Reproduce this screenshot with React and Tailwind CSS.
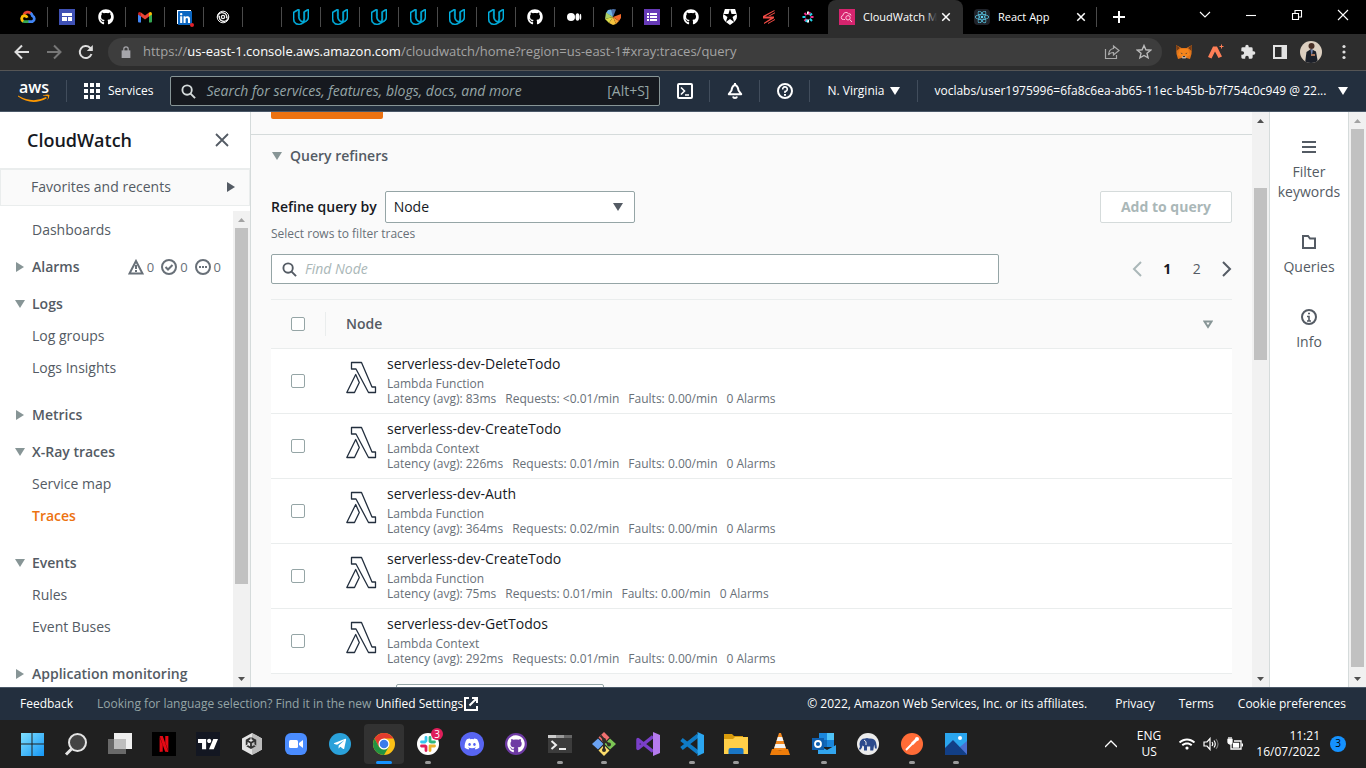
import React from "react";
import { FaGithub, FaDiscord, FaLinkedin, FaReact, FaTelegramPlane, FaWifi } from "react-icons/fa";
import { FaUnity } from "react-icons/fa6";
import { SiUdacity, SiAuth0, SiNetflix, SiTradingview } from "react-icons/si";

/* ---------- shared glyphs ---------- */

function Caret({ dir = "down", className = "" }) {
  const d = { down: "M0 1h10L5 9z", right: "M1 0v10l8-5z" }[dir];
  return (
    <svg viewBox="0 0 10 10" className={`size-[10px] shrink-0 ${className}`} fill="currentColor" aria-hidden="true">
      <path d={d} />
    </svg>
  );
}

function Cross({ className = "", width = 2 }) {
  return (
    <svg viewBox="0 0 16 16" className={className} fill="none" stroke="currentColor" strokeWidth={width} aria-hidden="true">
      <path d="M2 2l12 12M14 2L2 14" />
    </svg>
  );
}

function Magnifier({ className = "" }) {
  return (
    <svg viewBox="0 0 16 16" className={className} fill="none" stroke="currentColor" strokeWidth="2" aria-hidden="true">
      <circle cx="6.5" cy="6.5" r="5" />
      <path d="M10.2 10.2l4.8 4.8" />
    </svg>
  );
}

function Scrollbar({ offset, thumb, upColor = "text-[#505050]", className = "" }) {
  return (
    <div className={`flex w-[17px] shrink-0 flex-col items-center bg-[#f1f1f1] ${className}`} aria-hidden="true">
      <svg viewBox="0 0 17 17" className={`size-[17px] shrink-0 ${upColor}`} fill="currentColor">
        <path d="M5 11h7L8.500 7z" />
      </svg>
      <div className={`shrink-0 ${offset}`} />
      <div className={`w-[13px] bg-[#c1c1c1] ${thumb}`} />
      <div className="flex-1" />
      <svg viewBox="0 0 17 17" className="size-[17px] shrink-0 text-[#505050]" fill="currentColor">
        <path d="M5 7h7l-3.500 4z" />
      </svg>
    </div>
  );
}

/* ---------- browser favicons ---------- */

const CloudIcon = () => (
  <svg viewBox="0 0 16 16" className="size-4" fill="none" strokeWidth="2.800">
    <path d="M3.800 5.800A4.400 4.400 0 0 1 11 4.500" stroke="#ea4335" />
    <path d="M10.600 4.200Q12 5.200 12.400 6.800A3.200 3.200 0 0 1 12.500 12.600H8" stroke="#4285f4" />
    <path d="M8.500 12.600H4.500Q3.300 12.600 2.500 12" stroke="#34a853" />
    <path d="M3.200 12.400A3.200 3.200 0 0 1 4 6.600Q6.300 6.400 7.200 8.800" stroke="#fbbc05" />
  </svg>
);
const SitesIcon = () => (
  <svg viewBox="0 0 16 16" className="size-4">
    <path fill="#3f51b5" d="M0 0h16v16H0z" />
    <path fill="#fff" d="M3 4h10v3H3zM3 8h5v4H3zM9 8h4v4H9z" />
  </svg>
);
const MailIcon = () => (
  <svg viewBox="0 0 16 16" className="size-4">
    <path fill="#4285f4" d="M1 5l3 2v6.500H2a1 1 0 0 1-1-1z" />
    <path fill="#34a853" d="M12 7l3-2v7.500a1 1 0 0 1-1 1h-2z" />
    <path fill="#ea4335" d="M4 3.500l4 3 4-3V7.500l-4 3-4-3z" />
    <path fill="#c5221f" d="M1 4.500Q1.500 2 4 3.500V7.500L1 5.500z" />
    <path fill="#fbbc04" d="M15 4.500Q14.500 2 12 3.500V7.500l3-2z" />
  </svg>
);
const LinkedIn = () => (
  <span className="relative">
    <span className="block size-4 p-px">
      <span className="block size-3.5 bg-white">
        <FaLinkedin className="size-4 text-[#0a66c2]" />
      </span>
    </span>
    <span className="absolute -right-0.5 -bottom-0.5 size-1 rounded-full bg-[#e0202a]" />
  </span>
);
const SwirlIcon = () => (
  <svg viewBox="0 0 16 16" className="size-4" fill="none" stroke="#eee" strokeWidth="1.300">
    <circle cx="8" cy="8" r="5.800" strokeWidth="1" />
    <path d="M2.500 8.500A4.500 4.500 0 0 1 9 4.200a3.800 3.800 0 0 1 2.500 5M13.500 7.500A4.500 4.500 0 0 1 7 11.800a3.800 3.800 0 0 1-2.500-5" />
    <circle cx="8" cy="8" r="1.600" />
  </svg>
);
const MediumIcon = () => (
  <svg viewBox="0 0 16 16" className="size-4" fill="#fff">
    <circle cx="5" cy="8" r="4" />
    <ellipse cx="11.500" cy="8" rx="2" ry="3.800" />
    <ellipse cx="14.500" cy="8" rx=".8" ry="3.300" />
  </svg>
);
const WheelIcon = () => (
  <svg viewBox="0 0 16 16" className="size-4">
    <path fill="#4c6fa8" d="M8 8L5 1l3-1 3 .5z" />
    <path fill="#6fb4e4" d="M8 8L1 4l2-3 3-.5z" />
    <path fill="#a9cf66" d="M8 8L1 3.500 0 10z" />
    <path fill="#d8dc4a" d="M8 8l-8 2 4 4z" />
    <path fill="#f5c33d" d="M8 8l-4 6 4 2 3-1z" />
    <path fill="#f5a030" d="M8 8l3 7 3-3z" />
    <path fill="#f2692a" d="M8 8l6 4 2-3V5z" />
  </svg>
);
const FormIcon = () => (
  <svg viewBox="0 0 16 16" className="size-4">
    <path fill="#673ab7" d="M0 0h16v16H0z" />
    <path fill="#fff" d="M3 4h2v2H3zM6 4h7v2H6zM3 7h2v2H3zM6 7h7v2H6zM3 10h2v2H3zM6 10h7v2H6z" />
  </svg>
);
const RedBolt = () => (
  <svg viewBox="0 0 16 16" className="size-4" fill="#f24b45">
    <path d="M13.500 1v1L4 7.500h9v1.800L3 15v-1.200L9.500 9.500H2V7z" />
    <path d="M14 3.300v1L9 7H7.200zM14 10v1l-7 4v-1z" />
  </svg>
);
const SparkIcon = () => (
  <svg viewBox="0 0 16 16" className="size-4" strokeWidth="2">
    <path stroke="#fff" d="M8 2.500v3M8 10.500v3" />
    <path stroke="#f0308c" d="M4.500 4l2 2.200M10.500 8h3M4.500 12l2-2.200M10 3.200L9 5.800" />
    <path stroke="#25d2e8" d="M12 4.500L9.800 6.500M9.800 9.800L12 12M2.500 8h3M6 13l1-2.500" />
  </svg>
);
const WatchIcon = () => (
  <svg viewBox="0 0 16 16" className="size-4 shrink-0">
    <path fill="#d6246e" d="M0 0h16v16H0z" />
    <g fill="none" stroke="#ffc7dd" strokeWidth="1">
      <path d="M6 10.500H4.500A2 2 0 0 1 4 6.500a3 3 0 0 1 5.500-1.700 2 2 0 0 1 2.500 1.700" />
      <circle cx="9" cy="8.800" r="2.200" />
      <path d="M10.700 10.500l2.300 2.500" />
    </g>
  </svg>
);

const Github = () => <FaGithub className="size-4 text-white" />;
const Udacity = () => <SiUdacity className="size-4 stroke-[#02b3e4] stroke-1 text-[#02b3e4]" />;
const Shield = () => <SiAuth0 className="size-4 text-white" />;
const Blank = () => null;

const pinned = [
  ["Cloud", CloudIcon], ["Sites", SitesIcon], ["GitHub", Github], ["Mail", MailIcon], ["LinkedIn", LinkedIn],
  ["Swirl", SwirlIcon], ["New tab", Blank], ["Udacity", Udacity], ["Udacity", Udacity], ["Udacity", Udacity],
  ["Udacity", Udacity], ["Udacity", Udacity], ["Udacity", Udacity], ["GitHub", Github], ["Medium", MediumIcon],
  ["Wheel", WheelIcon], ["Forms", FormIcon], ["GitHub", Github], ["Auth0", Shield], ["Serverless", RedBolt],
  ["Spark", SparkIcon],
];

function TabStrip() {
  return (
    <div className="flex h-[34px] shrink-0 bg-black pl-[9px] text-white">
      {pinned.map(([name, Icon], i) => (
        <button key={i} aria-label={name} className="flex w-[39px] shrink-0 items-center">
          <span className="flex flex-1 justify-center"><Icon /></span>
          <span className={`h-5 w-px ${i < pinned.length - 1 ? "bg-[#4a4a4a]" : ""}`} />
        </button>
      ))}
      <div className="flex w-[135px] shrink-0 items-center rounded-t-lg bg-[#2d2d2d] pr-2 pl-[11px]">
        <WatchIcon />
        <span className="relative ml-2 min-w-0 flex-1 overflow-hidden text-[11px] whitespace-nowrap">
          CloudWatch M
          <span className="absolute inset-y-0 right-0 w-3 bg-linear-to-r from-transparent to-[#2d2d2d]" />
        </span>
        <button aria-label="Close tab" className="p-1"><Cross className="size-2.5" width={2.4} /></button>
      </div>
      <div className="flex w-[134px] shrink-0 items-center pl-[11px]">
        <span className="flex size-4 items-center justify-center rounded-sm bg-[#20232a]">
          <FaReact className="size-3.5 text-[#61dafb]" />
        </span>
        <span className="ml-2 flex-1 text-[11px] whitespace-nowrap">React App</span>
        <button aria-label="Close tab" className="mr-1.5 p-1"><Cross className="size-2.5" width={2.4} /></button>
        <span className="h-5 w-px bg-[#4a4a4a]" />
      </div>
      <button aria-label="New tab" className="ml-4 self-center">
        <svg viewBox="0 0 12 12" className="size-3" stroke="#fff" strokeWidth="2"><path d="M6 0v12M0 6h12" /></svg>
      </button>
      <div className="ml-auto flex items-center pb-1">
        {[
          ["Search tabs", "M1 3l5 5 5-5"],
          ["Minimize", "M1 6.500h10"],
          ["Restore", "M1.500 4.500h6v6h-6zM4 4V1.500h6.500V8H8"],
          ["Close", "M1 1l10 10M11 1L1 11"],
        ].map(([name, d]) => (
          <button key={name} aria-label={name} className="flex w-[46px] justify-center">
            <svg viewBox="0 0 12 12" className="size-3" fill="none" stroke="#fff" strokeWidth="1.100"><path d={d} /></svg>
          </button>
        ))}
      </div>
    </div>
  );
}

function AddressBar() {
  return (
    <div className="flex h-[37px] shrink-0 items-center border-b border-[#555] bg-[#2d2d2d] pr-5 pl-3.5 text-[#dedede]">
      <button aria-label="Back">
        <svg viewBox="0 0 16 16" className="size-4" fill="none" stroke="currentColor" strokeWidth="2"><path d="M15 8H2M8 1.500L1.500 8 8 14.500" /></svg>
      </button>
      <button aria-label="Forward" className="ml-4">
        <svg viewBox="0 0 16 16" className="size-4" fill="none" stroke="#777" strokeWidth="2"><path d="M1 8h13M8 1.500L14.500 8 8 14.500" /></svg>
      </button>
      <button aria-label="Reload" className="ml-4">
        <svg viewBox="0 0 16 16" className="size-4" fill="none" stroke="currentColor" strokeWidth="2"><path d="M13.500 10A6 6 0 1 1 12 3.700L14 5.600" /><path d="M14.800 1v6h-6z" fill="currentColor" stroke="none" /></svg>
      </button>
      <div className="ml-3.5 flex h-7 min-w-0 flex-1 items-center rounded-full bg-[#3d3d3d] pr-2.5 pl-[13px] text-[13px] whitespace-nowrap text-[#a3a3a3]">
        <svg viewBox="0 0 8 11" className="mr-3 h-3 w-2.5" fill="#a6a6ab"><path d="M0 4h8v7H0z" /><path d="M2 4.500V2.800a2 2 0 0 1 4 0v1.700" fill="none" stroke="#a6a6ab" strokeWidth="1.100" /></svg>
        <span className="flex-1">
          https://<span className="text-white">us-east-1.console.aws.amazon.com</span>/cloudwatch/home?region=us-east-1#xray:traces/query
        </span>
        <button aria-label="Share">
          <svg viewBox="0 0 16 16" className="size-4" fill="none" stroke="#aaa" strokeWidth="1.200"><path d="M1.500 5v9.500h11V11M9.500 2l5.500 4.500-5.500 4.500V8.500Q6 8.500 4.500 11 5 5 9.500 4.500z" /></svg>
        </button>
        <button aria-label="Bookmark" className="ml-4">
          <svg viewBox="0 0 16 16" className="size-4" fill="none" stroke="#bbb" strokeWidth="1.400"><path d="M8 1.500l1.900 4.300 4.700.4-3.600 3.100 1.100 4.600L8 11.500l-4.100 2.400L5 9.300 1.400 6.200l4.700-.4z" /></svg>
        </button>
      </div>
      <button aria-label="Fox wallet" className="ml-3.5">
        <svg viewBox="0 0 16 16" className="size-4">
          <path fill="#e2761b" d="M0 1l5.500 3h5L16 1l-.5 9-1.500 5-3.500-1h-5L2 15 .5 10z" />
          <path fill="#763d16" d="M0 1l4 3-3.500 3zM16 1l-4 3 3.500 3z" />
          <path fill="#f6851b" d="M4 5h8l2 6-4 2H6l-4-2z" />
          <path fill="#c0ad9e" d="M5.500 12.500h5l-.8 2H6.300z" />
          <path fill="#233447" d="M4.500 8.500l2 1-.5.8zM11.500 8.500l-2 1 .5.8zM7 12h2v1H7z" />
        </svg>
      </button>
      <button aria-label="Extension" className="ml-4">
        <svg viewBox="0 0 16 16" className="size-4" fill="#ff7f57"><path d="M5 2.500h4l5 10-3.500 1.500L7 7.500 3.500 14.500 0 13zM13 .5h1V2h1.500v1H14v1.500h-1V3h-1.500V2H13z" /></svg>
      </button>
      <button aria-label="Extensions" className="ml-4">
        <svg viewBox="0 0 24 24" className="size-4" fill="#e3e3e3"><path d="M20.500 11H19V7a2 2 0 0 0-2-2h-4V3.500a2.500 2.500 0 0 0-5 0V5H4a2 2 0 0 0-2 2v3.800h1.500a2.700 2.700 0 0 1 0 5.400H2V20a2 2 0 0 0 2 2h3.800v-1.500a2.700 2.700 0 0 1 5.400 0V22H17a2 2 0 0 0 2-2v-4h1.500a2.500 2.500 0 0 0 0-5z" /></svg>
      </button>
      <button aria-label="Side panel" className="ml-4">
        <svg viewBox="0 0 16 16" className="size-4"><path fill="#e3e3e3" d="M1 1h14v14H1z" /><path fill="#2d2d2d" d="M3 3h6.500v10H3z" /></svg>
      </button>
      <button aria-label="Profile" className="ml-3 overflow-hidden rounded-full">
        <svg viewBox="0 0 22 22" className="size-[22px]">
          <path fill="#dccfc0" d="M0 0h22v22H0z" />
          <path fill="#1c2029" d="M5 22l1.500-11L11 8l5 2.500L18 22z" />
          <circle cx="11.500" cy="5" r="3" fill="#4a3026" />
          <path fill="#7080a8" d="M10.500 8.500H13L12.200 13h-1z" />
          <path fill="#a9745a" d="M11 13h4v2h-4z" />
        </svg>
      </button>
      <button aria-label="Menu" className="ml-5">
        <svg viewBox="0 0 4 16" className="h-4 w-1" fill="#dedede"><circle cx="2" cy="2.500" r="1.600" /><circle cx="2" cy="8" r="1.600" /><circle cx="2" cy="13.500" r="1.600" /></svg>
      </button>
    </div>
  );
}

/* ---------- console header ---------- */

const Divider = () => <span className="h-[22px] w-px shrink-0 bg-[#414d5c]" />;

function ConsoleHeader() {
  return (
    <header className="flex h-[41px] shrink-0 items-center border-b border-[#4a5868] bg-[#232f3e] text-xs font-medium whitespace-nowrap text-white">
      <a href="#home" className="ml-[18px] flex w-8 shrink-0 flex-col items-center">
        <span className="text-base leading-[14px] font-semibold">aws</span>
        <svg viewBox="0 0 32 9" className="h-[9px] w-8" fill="#ff9900"><path d="M0 1.500Q15 10 28 3l.8 1.200Q14 12.500 0 2.500zM25 1.500q5-1.500 6.500-.5 0 3-2.500 5.500 1.500-3 .8-4.300-1.800-.7-4.800-.2z" /></svg>
      </a>
      <span className="ml-4 flex"><Divider /></span>
      <button className="ml-[17px] flex shrink-0 items-center gap-2">
        <svg viewBox="0 0 16 16" className="size-4" fill="#fff"><path d="M0 0h4v4H0zM6 0h4v4H6zM12 0h4v4h-4zM0 6h4v4H0zM6 6h4v4H6zM12 6h4v4h-4zM0 12h4v4H0zM6 12h4v4H6zM12 12h4v4h-4z" /></svg>
        Services
      </button>
      <label className="ml-[17px] flex h-[30px] w-[490px] min-w-0 items-center rounded-xs border border-[#879596] bg-[#16191f] px-2.5 text-sm font-normal text-[#95a5a6]">
        <Magnifier className="size-[15px] shrink-0 text-[#d5dbdb]" />
        <input aria-label="Search" placeholder="Search for services, features, blogs, docs, and more" className="ml-2.5 min-w-0 flex-1 bg-transparent italic outline-none placeholder:text-[#95a5a6]" />
        [Alt+S]
      </label>
      <button aria-label="CloudShell" className="ml-[17px]">
        <svg viewBox="0 0 16 16" className="size-4" fill="none" stroke="#fff" strokeWidth="2"><rect x="1" y="1" width="14" height="14" rx="1" /><path d="M4 4.500L7.500 8 4 11.500M8 12h4" strokeWidth="1.600" /></svg>
      </button>
      <span className="ml-4 flex"><Divider /></span>
      <button aria-label="Notifications" className="ml-[17px]">
        <svg viewBox="0 0 16 16" className="size-4" fill="none" stroke="#fff" strokeWidth="2"><path d="M8 2Q5 3 4.500 7.500L1.800 11.200h12.400L11.500 7.500Q11 3 8 2z" strokeLinejoin="round" /><path d="M6 13.500q.3 1.500 2 1.500t2-1.500M8 0v3" /></svg>
      </button>
      <span className="ml-4 flex"><Divider /></span>
      <button aria-label="Help" className="ml-[17px]">
        <svg viewBox="0 0 16 16" className="size-4" fill="none" stroke="#fff" strokeWidth="2"><circle cx="8" cy="8" r="7" /><path d="M5.700 6.500A2.300 2.300 0 1 1 8 8.500V10" strokeWidth="1.600" /><path d="M7 11h2v1.800H7z" fill="#fff" stroke="none" /></svg>
      </button>
      <span className="ml-4 flex"><Divider /></span>
      <button className="ml-[17px] flex shrink-0 items-center gap-1.5">N. Virginia <Caret className="size-2" /></button>
      <span className="ml-[17px] flex"><Divider /></span>
      <button className="mr-[18px] ml-4 flex flex-1 items-center justify-between gap-1">
        <span>voclabs/user1975996=6fa8c6ea-ab65-11ec-b45b-b7f754c0c949 @ 22...</span>
        <Caret className="size-2" />
      </button>
    </header>
  );
}

/* ---------- side navigation ---------- */

const iconStroke = { fill: "none", stroke: "currentColor", strokeWidth: 2 };

function AlarmCounts() {
  return (
    <span className="ml-auto flex items-center gap-[7px] text-[13px] font-normal text-[#687078]">
      <span className="flex items-center gap-[3px]">
        <svg viewBox="0 0 16 16" className="size-4" {...iconStroke}><path d="M8 2L1.500 14.500h13z" /><path d="M8 6v4M8 11v2" /></svg>0
      </span>
      <span className="flex items-center gap-[3px]">
        <svg viewBox="0 0 16 16" className="size-4" {...iconStroke}><circle cx="8" cy="8" r="7" /><path d="M4.500 8L7 10.500 11.500 6" /></svg>0
      </span>
      <span className="flex items-center gap-[3px]">
        <svg viewBox="0 0 16 16" className="size-4" {...iconStroke}><circle cx="8" cy="8" r="7" /><path d="M4 8h2M7 8h2M10 8h2" /></svg>0
      </span>
    </span>
  );
}

function NavSection({ title, open, items = [], extra }) {
  return (
    <section>
      <h3 className="flex h-8 items-center pr-3 pl-[15px]">
        <button className="flex items-center gap-[7px] font-semibold">
          <Caret dir={open ? "down" : "right"} className="text-[#879596]" />
          {title}
        </button>
        {extra}
      </h3>
      {items.length > 0 && (
        <ul className="pb-2.5">
          {items.map((item) => (
            <li key={item} className="flex h-8 items-center pl-8">
              <a href="#nav" className={item === "Traces" ? "font-semibold text-[#ec7211]" : ""}>{item}</a>
            </li>
          ))}
        </ul>
      )}
    </section>
  );
}

function SideNav() {
  return (
    <aside className="flex w-[251px] shrink-0 flex-col border-r border-[#d5dbdb] bg-white text-sm text-[#545b64]">
      <div className="flex h-14 shrink-0 items-center justify-between pr-5 pl-[27px]">
        <h2 className="text-lg font-semibold text-[#16191f]">CloudWatch</h2>
        <button aria-label="Close navigation"><Cross className="size-4" width={1.8} /></button>
      </div>
      <button className="flex h-[38px] shrink-0 items-center justify-between border border-t-2 border-[#eaeded] bg-[#fafafa] pr-[13px] pb-0.5 pl-[30px]">
        Favorites and recents
        <Caret dir="right" className="text-[#545b64]" />
      </button>
      <div className="flex min-h-0 flex-1">
        <nav className="flex min-w-0 flex-1 flex-col gap-[5px] overflow-hidden pt-2 whitespace-nowrap">
          <a href="#dashboards" className="flex h-8 shrink-0 items-center pl-8">Dashboards</a>
          <NavSection title="Alarms" extra={<AlarmCounts />} />
          <NavSection title="Logs" open items={["Log groups", "Logs Insights"]} />
          <NavSection title="Metrics" />
          <NavSection title="X-Ray traces" open items={["Service map", "Traces"]} />
          <NavSection title="Events" open items={["Rules", "Event Buses"]} />
          <NavSection title="Application monitoring" />
        </nav>
        <Scrollbar className="mt-[5px]" offset="h-0" thumb="h-[356px]" upColor="text-[#a3a3a3]" />
      </div>
    </aside>
  );
}

/* ---------- main panel ---------- */

const nodes = [
  { name: "serverless-dev-DeleteTodo", type: "Lambda Function", latency: "83ms", requests: "<0.01/min" },
  { name: "serverless-dev-CreateTodo", type: "Lambda Context", latency: "226ms", requests: "0.01/min" },
  { name: "serverless-dev-Auth", type: "Lambda Function", latency: "364ms", requests: "0.02/min" },
  { name: "serverless-dev-CreateTodo", type: "Lambda Function", latency: "75ms", requests: "0.01/min" },
  { name: "serverless-dev-GetTodos", type: "Lambda Context", latency: "292ms", requests: "0.01/min" },
];

const Check = ({ label }) => (
  <input type="checkbox" aria-label={label} className="block size-3.5 appearance-none rounded-xs border border-[#95a5a6] bg-white" />
);

const LambdaIcon = () => (
  <svg viewBox="0 0 31 33" className="h-[33px] w-[31px] shrink-0" fill="none" stroke="#232f3e" strokeWidth="1.300" strokeLinejoin="round">
    <path d="M5.500 1.500V8H10L22.500 31.500H29.500V26H26L15.500 1.500z" />
    <path d="M9.700 13.500L.8 31.500H8.500L13.300 21.500z" />
  </svg>
);

function NodeTable() {
  return (
    <table className="mt-[15px] w-full border-collapse">
      <thead>
        <tr className="h-[49px] border-y border-[#eaeded]">
          <th className="w-[55px] border-0 p-0">
            <div className="flex h-6 items-center border-r border-[#eaeded] pl-5"><Check label="Select all" /></div>
          </th>
          <th className="p-0 pr-[19px] pl-5">
            <div className="flex items-center justify-between text-sm font-semibold text-[#545b64]">
              Node
              <svg viewBox="0 0 10 9" className="h-[9px] w-2.5" fill="none" stroke="#879596" strokeWidth="2"><path d="M1.500 1.500h7L5 7z" /></svg>
            </div>
          </th>
        </tr>
      </thead>
      <tbody>
        {nodes.map((n, i) => (
          <tr key={i} className="h-[65px] border-b border-[#eaeded] bg-white">
            <td className="p-0 pl-5"><Check label={`Select ${n.name}`} /></td>
            <td className="p-0 pl-5">
              <div className="flex gap-2.5">
                <div className="pt-[7px]"><LambdaIcon /></div>
                <div className="pb-[3px] text-xs leading-[15px] whitespace-nowrap text-[#687078]">
                  <div className="mb-0.5 text-sm leading-5 text-[#16191f]">{n.name}</div>
                  <div>{n.type}</div>
                  <div className="flex gap-[9px]">
                    <span>Latency (avg): {n.latency}</span>
                    <span>Requests: {n.requests}</span>
                    <span>Faults: 0.00/min</span>
                    <span>0 Alarms</span>
                  </div>
                </div>
              </div>
            </td>
          </tr>
        ))}
      </tbody>
    </table>
  );
}

function MainPanel() {
  return (
    <main className="min-w-0 flex-1 overflow-hidden bg-[#fafafa] text-sm text-[#16191f]">
      <div className="flex h-[23px] items-start border-b border-[#d5dbdb] pl-5">
        <button aria-label="Run query" className="h-[7px] w-28 rounded-b-xs bg-[#ec7211]" />
      </div>
      <div className="px-5">
        <button className="mt-2.5 flex h-[22px] items-center gap-2 pl-px font-semibold text-[#545b64]">
          <Caret className="text-[#879596]" />
          Query refiners
        </button>
        <div className="mt-6 flex h-8 items-center">
          <label htmlFor="refine" className="font-semibold">Refine query by</label>
          <div className="relative ml-2 h-full w-[250px]">
            <select id="refine" defaultValue="Node" className="size-full appearance-none rounded-xs border border-[#95a5a6] bg-white px-2">
              <option>Node</option>
            </select>
            <Caret className="pointer-events-none absolute top-[11px] right-3 text-[#545b64]" />
          </div>
          <button disabled className="ml-auto h-full rounded-xs border border-[#d5dbdb] bg-white px-5 font-bold text-[#aab7b8]">Add to query</button>
        </div>
        <p className="mt-0.5 text-xs leading-[18px] text-[#687078]">Select rows to filter traces</p>
        <div className="mt-[11px] flex items-center">
          <label className="mr-[133px] flex h-[30px] flex-1 items-center rounded-xs border border-[#95a5a6] bg-white px-2.5">
            <Magnifier className="size-[15px] text-[#545b64]" />
            <input aria-label="Find Node" placeholder="Find Node" className="ml-2 flex-1 bg-transparent italic outline-none placeholder:text-[#aab7b8]" />
          </label>
          <div className="flex w-[100px] items-center justify-between text-[#545b64]">
            <button aria-label="Previous page"><svg viewBox="0 0 10 16" className="h-4 w-2.5" fill="none" stroke="#aab7b8" strokeWidth="2"><path d="M9 1L2 8l7 7" /></svg></button>
            <button className="font-bold text-[#16191f]">1</button>
            <button>2</button>
            <button aria-label="Next page"><svg viewBox="0 0 10 16" className="h-4 w-2.5" fill="none" stroke="#545b64" strokeWidth="2"><path d="M1 1l7 7-7 7" /></svg></button>
          </div>
        </div>
        <NodeTable />
        <div className="mt-2.5 ml-[125px] h-8 w-52 rounded-xs border border-[#95a5a6] bg-white" />
      </div>
    </main>
  );
}

function ToolRail() {
  const tools = [
    ["Filter keywords", <path key="a" d="M1 3h14M1 8h14M1 13h14" />],
    ["Queries", <path key="b" d="M2 2h5l2 2.500h5V14H2z" />],
    ["Info", <g key="c"><circle cx="8" cy="8" r="7" /><path d="M7 4.500h2M6 7.500h2v4M6 12h4" strokeWidth="1.600" /></g>],
  ];
  return (
    <aside className="flex w-20 shrink-0 flex-col gap-8 border-x border-[#d5dbdb] bg-white pt-[27px] text-center text-sm leading-5 text-[#545b64]">
      {tools.map(([label, art]) => (
        <button key={label} className="flex flex-col items-center gap-[7px]">
          <svg viewBox="0 0 16 16" className="size-4" fill="none" stroke="currentColor" strokeWidth="2">{art}</svg>
          <span className="w-[70px]">{label}</span>
        </button>
      ))}
    </aside>
  );
}

function ConsoleFooter() {
  return (
    <footer className="flex h-[33px] shrink-0 items-center border-t border-[#4a5868] bg-[#232f3e] px-5 text-xs font-medium whitespace-nowrap text-white">
      <a href="#feedback">Feedback</a>
      <span className="ml-6 font-normal text-[#95a5a6]">Looking for language selection? Find it in the new</span>
      <a href="#settings" className="ml-1 flex items-center">
        Unified Settings
        <svg viewBox="0 0 16 16" className="size-4" fill="none" stroke="#fff" strokeWidth="2"><path d="M6 2H2v12h12v-4M9 2h5v5M14 2L6.500 9.500" /></svg>
      </a>
      <span className="ml-auto">© 2022, Amazon Web Services, Inc. or its affiliates.</span>
      <a href="#privacy" className="ml-7">Privacy</a>
      <a href="#terms" className="ml-6">Terms</a>
      <a href="#cookies" className="ml-6">Cookie preferences</a>
    </footer>
  );
}

/* ---------- desktop taskbar ---------- */

const svg6 = "size-6";
const apps = [
  ["Start", <svg key="i" viewBox="0 0 24 24" className={svg6}><defs><linearGradient id="win" x1="0" y1="0" x2="1" y2="1"><stop stopColor="#7fe0ff" /><stop offset="1" stopColor="#1596f5" /></linearGradient></defs><path fill="url(#win)" d="M1 1h10.500v10.500H1zM12.500 1H24v10.500H12.500zM1 12.500h10.500V24H1zM12.500 12.500H24V24H12.500z" /></svg>],
  ["Search", <svg key="i" viewBox="0 0 24 24" className={svg6} fill="#444" stroke="#e4e4e4" strokeWidth="2"><circle cx="13.500" cy="10.500" r="8.500" /><path d="M7.500 17L2 22.500" strokeWidth="3" /></svg>],
  ["Task view", <svg key="i" viewBox="0 0 24 24" className={svg6}><path fill="#efefef" d="M6 1h18v16H6z" /><path fill="#777" d="M0 7h18v15H0z" opacity=".85" /><path fill="#bdbdbd" d="M6 7h12v10H6z" /></svg>],
  ["Netflix", <span key="i" className="flex size-6 items-center justify-center bg-black"><SiNetflix className="size-4 text-[#e50914]" /></span>],
  ["TradingView", <span key="i" className="flex size-6 items-center justify-center bg-[#131722]"><SiTradingview className="size-5 text-white" /></span>],
  ["Unity", <svg key="i" viewBox="0 0 24 24" className={svg6}><path fill="#e4e4e4" d="M12 1l10 5.500v11L12 23 2 17.500v-11z" /><path fill="#bbb" d="M12 1l10 5.500v11L12 23z" /><FaUnity x="5" y="5" width="14" height="14" color="#333" /></svg>],
  ["Zoom", <svg key="i" viewBox="0 0 24 24" className={svg6}><rect x="1" y="1" width="22" height="22" rx="6" fill="#4a8cff" /><rect x="5" y="8" width="9" height="8" rx="1.500" fill="#fff" /><path fill="#fff" d="M15 11l4-3v8l-4-3z" /></svg>],
  ["Telegram", <span key="i" className="flex size-[22px] items-center justify-center rounded-full bg-[#2aa1da]"><FaTelegramPlane className="size-3.5 text-white" /></span>],
  ["Chrome", <svg key="i" viewBox="0 0 24 24" className={svg6}><circle cx="12" cy="12" r="11" fill="#fbc116" /><path fill="#e33b2e" d="M2.500 6.500A11 11 0 0 1 21.500 6.500H12L7 15z" /><path fill="#229342" d="M2.500 6.500A11 11 0 0 0 12 23l5-8.500-5 3-5-2.500z" /><circle cx="12" cy="12" r="5.500" fill="#fff" /><circle cx="12" cy="12" r="4.300" fill="#3a7bea" /></svg>, "active"],
  ["Slack", <span key="i" className="relative"><svg viewBox="0 0 24 24" className={svg6}><circle cx="12" cy="12" r="11" fill="#fff" /><g strokeWidth="2.800" strokeLinecap="round" fill="none"><path stroke="#36c5f0" d="M10 5.500V9M5.500 10H9" /><path stroke="#2eb67d" d="M14 5.500V9.500M15 10h3.500" /><path stroke="#ecb22e" d="M14 15v3.500M14 14h4.500" /><path stroke="#e01e5a" d="M10 14.500v4M5.500 14H9" /></g></svg><span className="absolute -top-1 left-[15px] flex size-3 items-center justify-center rounded-full bg-[#e01e5a] text-[10px] leading-none text-white">3</span></span>, "open"],
  ["Discord", <span key="i" className="flex size-6 items-center justify-center rounded-full bg-[#5865f2]"><FaDiscord className="size-4 text-white" /></span>],
  ["GitHub Desktop", <span key="i" className="flex size-[22px] items-center justify-center rounded-full bg-[#6e3aa4]"><FaGithub className="size-[18px] text-white" /></span>],
  ["Terminal", <svg key="i" viewBox="0 0 24 24" className={svg6}><path fill="#3c3c3c" d="M0 3h24v18H0z" /><path fill="#ccc" d="M0 3h8v3H0z" /><path fill="#999" d="M8 3h8v3H8z" /><path fill="#666" d="M16 3h8v3h-8z" /><path fill="none" stroke="#eee" strokeWidth="2" d="M3.500 9L8 13l-4.500 4M11 17h7" /></svg>, "open"],
  ["Git", <svg key="i" viewBox="0 0 24 24" className={svg6}><path fill="#f07070" d="M12 0l5.500 5.500L12 11 6.500 5.500z" /><path fill="#6aa2f2" d="M6 6.500l5.500 5.500L6 17.500 0 12z" /><path fill="#7cc655" d="M18 6.500l6 5.500-6 5.500-5.500-5.500z" /><path fill="#fbdc6a" d="M12 13l5.500 5.500L12 24l-5.500-5.500z" /><path stroke="#302c28" strokeWidth="2" fill="none" d="M8.500 3.500l3.500 4v11M12 8l5 4.500" /><circle cx="12" cy="8" r="2" fill="#302c28" /><circle cx="12" cy="18" r="2" fill="#302c28" /><circle cx="17" cy="12.500" r="2" fill="#302c28" /></svg>, "open"],
  ["Visual Studio", <svg key="i" viewBox="0 0 24 24" className={svg6}><path fill="none" stroke="#7a3fc9" strokeWidth="3.500" strokeLinejoin="round" d="M17 4.500L2 16.500v-9L17 19.500" /><path fill="#b57bee" d="M17 0l7 3v18l-7 3z" /></svg>],
  ["VS Code", <svg key="i" viewBox="0 0 24 24" className={svg6}><path fill="none" stroke="#0f7bc6" strokeWidth="4" d="M18 3.500L1.500 16.500M1.500 7.500L18 20.500" /><path fill="#2ba6f0" d="M17.500 0L24 3v18l-6.500 3z" /></svg>, "open"],
  ["File Explorer", <svg key="i" viewBox="0 0 24 24" className={svg6}><path fill="#d99b0b" d="M0 2h8l2 2h9v5H0z" /><path fill="#ffcf48" d="M0 7h9l2-2h13v17H0z" /><path fill="#1976c5" d="M4.500 22v-4a2 2 0 0 1 2-2h11a2 2 0 0 1 2 2v4z" /></svg>, "open"],
  ["VLC", <svg key="i" viewBox="0 0 24 24" className={svg6}><path fill="#f58a1f" d="M11 1h2l5.500 17h-13z" /><path fill="#f3f3f3" d="M9.800 5h4.400l1.300 4h-7zM7.500 12h9l1.300 4H6.200z" /><path fill="#ef7d0a" d="M4 17h3q5 2.500 10 0h3l2 6H2z" /></svg>],
  ["Outlook", <svg key="i" viewBox="0 0 24 24" className={svg6}><path fill="#1a86dc" d="M7 1h15v14H7z" /><path fill="#4fc3f7" d="M15 1h7v7h-7z" /><path fill="#1268b8" d="M7 8h8v7H7z" /><path fill="#32a5ee" d="M6 13l9 5 9-5v9H6z" /><path fill="#0f5fae" d="M0 6h12v12H0z" /><circle cx="6" cy="12" r="3" fill="none" stroke="#fff" strokeWidth="1.800" /></svg>, "open"],
  ["Elephant", <svg key="i" viewBox="0 0 24 24" className={svg6}><circle cx="12" cy="12" r="11" fill="#ececec" /><path fill="#2c4a8c" d="M3.500 12Q4 6.500 9 6.500q2-1 4 0 6-.5 7 4 .8 3 .8 6H19l-.8-4-1 6h-3v-4H11v4H8v-4l-1.500-1Q6 17 4 18l-1-1.200Q4.500 15 3.500 12z" /><path stroke="#ececec" fill="none" d="M8 8q3 1 2 5" /></svg>],
  ["Postman", <svg key="i" viewBox="0 0 24 24" className={svg6}><circle cx="12" cy="12" r="11" fill="#ff6c37" /><path d="M6 18l8-8" stroke="#fff" strokeWidth="2" /><path d="M11 11l4.500-4.500 2 2-4.500 4.500z" fill="#fff" /><circle cx="17" cy="7" r="2" fill="#fff" /></svg>, "open"],
  ["Photos", <svg key="i" viewBox="0 0 24 24" className={svg6}><path fill="#2aa5ee" d="M1 1h22v22H1z" /><path fill="#4a6fd0" d="M10 20L23 9v14H10z" /><path fill="#123f86" d="M1 16l8-8 14 14.500V23H1z" /><circle cx="16" cy="6" r="2" fill="#fff" /></svg>, "open"],
];

function Taskbar() {
  return (
    <div className="flex h-12 shrink-0 items-center bg-[#202020] pr-5 pl-2.5 text-xs text-white">
      {apps.map(([name, art, state]) => (
        <button
          key={name}
          aria-label={name}
          className={`relative mx-0.5 flex size-10 shrink-0 items-center justify-center rounded ${state === "active" ? "bg-[#323232]" : ""}`}
        >
          {art}
          {state === "active" && <span className="absolute bottom-0 h-[3px] w-4 rounded-full bg-[#1592ff]" />}
          {state === "open" && <span className="absolute bottom-0 h-[3px] w-1.5 rounded-full bg-[#9a9a9a]" />}
        </button>
      ))}
      <div className="ml-auto flex items-center">
        <button aria-label="Hidden icons">
          <svg viewBox="0 0 12 8" className="h-2 w-3" fill="none" stroke="#fff" strokeWidth="1.300"><path d="M0 7l6-6 6 6" /></svg>
        </button>
        <button className="ml-5 text-center leading-4">ENG<br />US</button>
        <button aria-label="System status" className="ml-[18px] flex items-center gap-2">
          <FaWifi className="size-4" />
          <svg viewBox="0 0 16 14" className="h-3.5 w-4" fill="none" stroke="#fff" strokeWidth="1.200"><path d="M1 5h3l3-3.500v11L4 9H1zM9 5q1.500 2 0 4M11 3.500q2.500 3.500 0 7" /><path d="M13 2q4 5 0 10" stroke="#777" /></svg>
          <svg viewBox="0 0 16 14" className="h-3.5 w-4" fill="none" stroke="#fff" strokeWidth="1.300"><path d="M4 7v5h10V4H7M15.500 6.500v3" /><path fill="#fff" d="M6.500 6.500h5v3.500h-5zM1 2.500h4V5a2 2 0 0 1-4 0zM2 0v2M4 0v2" /></svg>
        </button>
        <button className="ml-[13px] text-right leading-4">11:21<br />16/07/2022</button>
        <span className="ml-2.5 flex size-4 items-center justify-center rounded-full bg-[#1592ff] text-[10px] text-black">3</span>
      </div>
    </div>
  );
}

export default function App() {
  return (
    <div className="flex h-screen flex-col overflow-hidden font-['Open_Sans','Noto_Sans',sans-serif]">
      <TabStrip />
      <AddressBar />
      <ConsoleHeader />
      <div className="flex min-h-0 flex-1">
        <SideNav />
        <MainPanel />
        <Scrollbar offset="h-[59px]" thumb="h-[172px]" />
        <ToolRail />
        <Scrollbar offset="h-0" thumb="h-[538px]" upColor="text-[#a3a3a3]" />
      </div>
      <ConsoleFooter />
      <Taskbar />
    </div>
  );
}
